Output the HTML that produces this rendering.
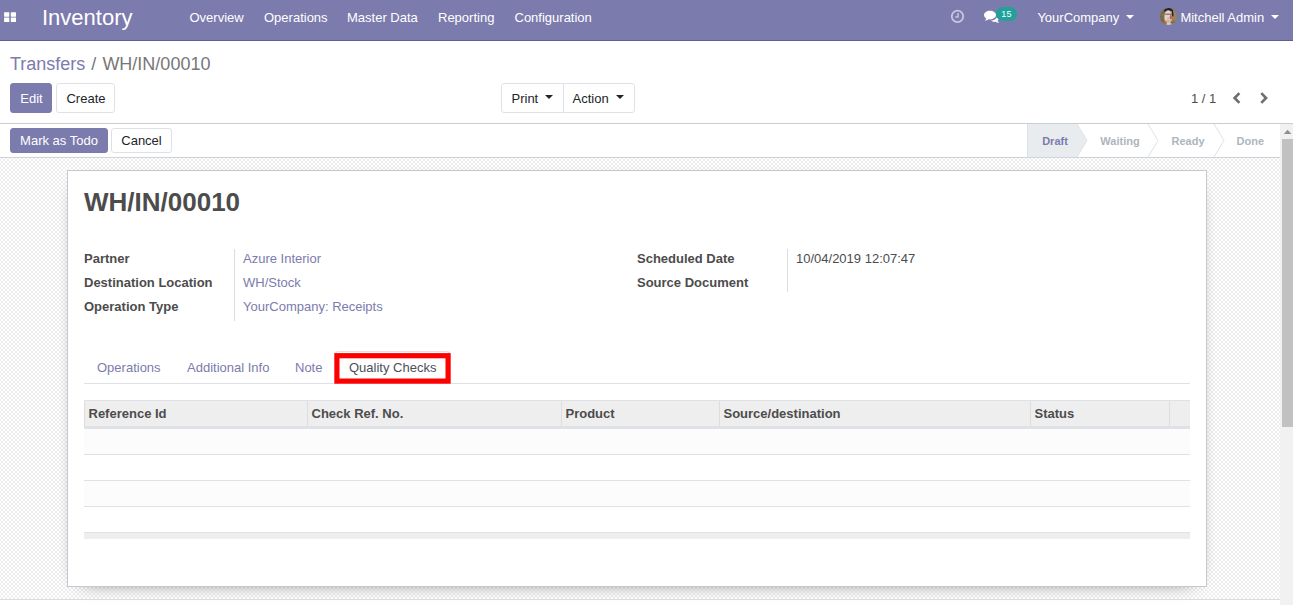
<!DOCTYPE html>
<html lang="en">
<head>
<meta charset="utf-8">
<title>Odoo - WH/IN/00010</title>
<style>
*{box-sizing:border-box;}
html,body{margin:0;padding:0;}
body{width:1293px;height:605px;overflow:hidden;position:relative;background:#fff;
  font-family:"Liberation Sans",Arial,sans-serif;font-size:13px;color:#4c4c4c;line-height:1.5;}
a{color:#7c7bad;text-decoration:none;}

/* ---------- navbar ---------- */
.navbar{position:absolute;left:0;top:0;width:1293px;height:41px;background:#7c7bad;border-bottom:1px solid #5f5e97;}
.navbar .apps{position:absolute;left:4px;top:12px;}
.navbar .brand{position:absolute;left:42px;top:0;height:35px;line-height:35px;font-size:22px;color:#fff;}
.navbar .menu{position:absolute;top:0;height:35px;line-height:35px;font-size:13px;color:#fff;}
.navbar .sys{position:absolute;top:0;height:35px;line-height:35px;font-size:13px;color:#fff;}
.caret{display:inline-block;width:0;height:0;border-left:4px solid transparent;border-right:4px solid transparent;border-top:4px solid currentColor;vertical-align:middle;}

/* ---------- control panel ---------- */
.cp{position:absolute;left:0;top:41px;width:1293px;height:83px;background:#fff;border-bottom:1px solid #ccc;}
.bc{position:absolute;left:10px;top:10px;font-size:18px;line-height:26px;color:#777;}
.bc a{color:#7c7bad;}
.btn{position:absolute;height:30px;line-height:30px;font-size:13px;border:1px solid #dee2e6;border-radius:3px;background:#fff;color:#212529;text-align:center;white-space:nowrap;}
.btn.primary{background:#7c7bad;border-color:#7c7bad;color:#fff;}

/* ---------- statusbar ---------- */
.sb{position:absolute;left:0;top:124px;width:1280px;height:34px;background:#fff;border-bottom:1px solid #ced4da;}
.sb .btn{height:25px;line-height:23px;}

/* ---------- content ---------- */
.content{position:absolute;left:0;top:158px;width:1280px;height:441px;
  background-color:#fff;
  background-image:conic-gradient(#eee 25%,#fff 0 50%,#eee 0 75%,#fff 0);
  background-size:4px 4px;background-position:-1px -1px;}
.sheet{position:absolute;left:67px;top:12px;width:1140px;height:417px;background:#fff;border:1px solid #c8c8d3;box-shadow:0 5px 20px -15px #000;}
.below{position:absolute;left:0;top:599px;width:1280px;height:6px;background:transparent;border-top:1px solid #dcdcdc;}

h1{position:absolute;left:16px;top:14px;margin:0;font-size:26px;line-height:34px;font-weight:bold;color:#4c4c4c;}
.lbl{position:absolute;font-weight:bold;color:#4c4c4c;line-height:20px;white-space:nowrap;}
.val{position:absolute;line-height:20px;white-space:nowrap;}
.vsep{position:absolute;width:1px;background:#ddd;}

.tabs{position:absolute;left:16px;top:182px;width:1106px;height:31px;border-bottom:1px solid #dee2e6;}
.tab{position:absolute;top:0;height:31px;line-height:30px;color:#7c7bad;white-space:nowrap;}
.tab.active{color:#495057;}
.hl{position:absolute;border:4px solid #f00;}

.lst{position:absolute;left:16px;top:229px;width:1106px;}
.lh{position:relative;height:29px;background:#eee;border-top:1px solid #dee2e6;border-bottom:3px solid #dee2e6;}
.th{position:absolute;top:0;height:25px;line-height:25px;border-left:1px solid #ddd;padding-left:3.500px;font-weight:bold;color:#4c4c4c;white-space:nowrap;}
.lr{height:26px;border-bottom:1px solid #dee2e6;background:#fff;}
.lr.odd{background:#fcfcfc;}
.lr.last{height:25px;border-bottom:0;}
.lf{height:7px;background:#eee;border-top:1px solid #dee2e6;}

/* ---------- scrollbar ---------- */
.scroll{position:absolute;left:1280px;top:124px;width:13px;height:481px;background:#f1f1f1;}
.scroll .thumb{position:absolute;left:2px;top:15px;width:11px;height:288px;background:#c1c1c1;}
.scroll .up{position:absolute;left:4px;top:6px;width:0;height:0;border-left:3.500px solid transparent;border-right:3.500px solid transparent;border-bottom:4px solid #8b8b8b;}
</style>
</head>
<body>

<div class="navbar">
  <svg class="apps" width="13" height="11" viewBox="0 0 13 11"><g fill="#fff"><rect x="0.100" y="0.300" width="5.200" height="4.400" rx="0.500"/><rect x="6.800" y="0.300" width="5.200" height="4.400" rx="0.500"/><rect x="0.100" y="5.600" width="5.200" height="4.300" rx="0.500"/><rect x="6.800" y="5.600" width="5.200" height="4.300" rx="0.500"/></g></svg>
  <div class="brand">Inventory</div>
  <div class="menu" style="left:189.500px">Overview</div>
  <div class="menu" style="left:264px">Operations</div>
  <div class="menu" style="left:347px">Master Data</div>
  <div class="menu" style="left:438px">Reporting</div>
  <div class="menu" style="left:514.500px">Configuration</div>

  <svg style="position:absolute;left:950px;top:9px" width="15" height="15" viewBox="0 0 15 15"><circle cx="7.500" cy="7.400" r="5.700" fill="none" stroke="#c7c5e0" stroke-width="1.800"/><path d="M8 4v4H5.300" fill="none" stroke="#c7c5e0" stroke-width="1.500"/></svg>
  <svg style="position:absolute;left:984px;top:10px" width="16" height="14" viewBox="0 0 16 14"><path fill="#fff" d="M6 0.800C2.700 0.800 0 2.700 0 5.100c0 1.400 0.900 2.600 2.200 3.400C2 9.400 1.400 10.100 0.800 10.700c1.600-0.100 3-0.700 3.900-1.400 0.400 0.100 0.900 0.100 1.300 0.100 3.300 0 6-1.900 6-4.300S9.300 0.800 6 0.800z"/><path fill="#fff" d="M13.300 10.600c1.100-0.700 1.900-1.800 1.900-3 0-1.300-0.900-2.500-2.300-3.200 0.100 0.400 0.200 0.700 0.200 1.100 0 2.700-2.800 4.800-6.300 4.900 0.900 0.800 2.200 1.300 3.700 1.300 0.400 0 0.800 0 1.200-0.100 0.800 0.600 2 1.100 3.400 1.200-0.500-0.500-1-1.200-1.200-2z" transform="translate(0,0.200)"/></svg>
  <div style="position:absolute;left:996px;top:7px;width:21px;height:14px;border-radius:7px;background:#21a19a;color:#fff;font-size:9px;line-height:14px;text-align:center;letter-spacing:0.300px;">15</div>
  <div class="sys" style="left:1037.400px">YourCompany</div>
  <div class="caret" style="position:absolute;left:1126px;top:15px;color:#fff"></div>
  <svg style="position:absolute;left:1160px;top:8px" width="17" height="17" viewBox="0 0 17 17">
    <defs><clipPath id="av"><circle cx="8.500" cy="8.500" r="8.500"/></clipPath></defs>
    <g clip-path="url(#av)">
      <rect width="17" height="17" fill="#877048"/>
      <rect x="0" y="0" width="6" height="17" fill="#7c6944"/>
      <rect x="11" y="3.500" width="6" height="0.900" fill="#b59e6c"/><rect x="11" y="5.500" width="6" height="0.900" fill="#b59e6c"/><rect x="11" y="7.500" width="6" height="0.900" fill="#b59e6c"/><rect x="11" y="9.500" width="6" height="0.900" fill="#b59e6c"/><rect x="11" y="11.500" width="6" height="0.900" fill="#ab9460"/>
      <rect x="1" y="6.500" width="3" height="0.800" fill="#9a8454"/><rect x="1" y="9.500" width="3" height="0.800" fill="#946a44"/>
      <path d="M3.900 3.300C4.500 0.600 8 -0.500 10.500 0.300C12.700 1 13.700 3 13.400 8.500L12.100 8L12 3.200C10 2.300 7 2.200 5 3.500Z" fill="#241c28"/>
      <ellipse cx="8.200" cy="8.900" rx="3.900" ry="6.600" fill="#dfd1cb"/>
      <ellipse cx="8" cy="13.300" rx="3" ry="1.900" fill="#d4b49e"/>
      <ellipse cx="10.900" cy="9.300" rx="1.200" ry="2.300" fill="#b9494b" opacity="0.850"/>
      <circle cx="8.300" cy="10.300" r="0.900" fill="#dfa3a5"/>
      <path d="M5.200 6.200H12" stroke="#5b4a4d" stroke-width="0.900" fill="none"/>
      <ellipse cx="5" cy="14.300" rx="1.600" ry="1.400" fill="#a9783e"/>
      <path d="M5.800 17C6.200 15.300 7.600 14.700 9.500 14.900C11.500 15.100 12.500 15.900 12.800 17Z" fill="#cfd1d6"/>
    </g>
  </svg>
  <div class="sys" style="left:1180.400px">Mitchell Admin</div>
  <div class="caret" style="position:absolute;left:1271px;top:15px;color:#fff"></div>
</div>

<div class="cp">
  <div class="bc"><a>Transfers</a><span style="padding:0 6px 0 6px">/</span>WH/IN/00010</div>
  <div class="btn primary" style="left:10px;top:42px;width:42px;padding-left:1px;">Edit</div>
  <div class="btn" style="left:56px;top:42px;width:59px;padding-left:1px;">Create</div>
  <div class="btn" style="left:501px;top:42px;width:63px;border-radius:3px 0 0 3px;text-align:left;padding-left:9.500px;">Print</div>
  <div class="btn" style="left:563px;top:42px;width:72px;border-radius:0 3px 3px 0;text-align:left;padding-left:8.500px;">Action</div>
  <div class="caret" style="position:absolute;left:545px;top:54px;color:#212529"></div>
  <div class="caret" style="position:absolute;left:616px;top:54px;color:#212529"></div>
  <div style="position:absolute;left:1191px;top:48px;line-height:20px;font-size:13px;color:#4c4c4c;">1 / 1</div>
  <svg style="position:absolute;left:1231px;top:50px" width="12" height="14" viewBox="0 0 12 14"><path d="M8.400 2.100L3.600 7l4.800 4.900" fill="none" stroke="#6d6d72" stroke-width="2.600"/></svg>
  <svg style="position:absolute;left:1258px;top:50px" width="12" height="14" viewBox="0 0 12 14"><path d="M3.300 2.100L8.100 7l-4.800 4.900" fill="none" stroke="#6d6d72" stroke-width="2.600"/></svg>
</div>

<div class="sb">
  <div class="btn primary" style="left:10px;top:4px;width:98px;">Mark as Todo</div>
  <div class="btn" style="left:111px;top:4px;width:61px;">Cancel</div>
  <svg style="position:absolute;left:1027px;top:0" width="253" height="33" viewBox="0 0 253 33">
    <path d="M0.500 0V33" stroke="#dee2e6" fill="none"/>
    <path d="M1 0H50L60 16.500L50 33H1Z" fill="#e9ecef"/>
    <path d="M50 0L60 16.500L50 33" stroke="#dee2e6" fill="none"/>
    <path d="M121 0L131 16.500L121 33" stroke="#dee2e6" fill="none"/>
    <path d="M187 0L197 16.500L187 33" stroke="#dee2e6" fill="none"/>
    <g font-family="Liberation Sans, Arial, sans-serif" font-size="11" font-weight="bold" text-anchor="middle">
      <text x="28" y="21" fill="#7c7bad">Draft</text>
      <text x="93" y="21" fill="#adb5bd">Waiting</text>
      <text x="161" y="21" fill="#adb5bd">Ready</text>
      <text x="223.300" y="21" fill="#adb5bd">Done</text>
    </g>
  </svg>
</div>

<div class="content">
  <div class="sheet">
    <h1>WH/IN/00010</h1>

    <div class="lbl" style="left:16px;top:78px;">Partner</div>
    <div class="lbl" style="left:16px;top:102px;">Destination Location</div>
    <div class="lbl" style="left:16px;top:126px;">Operation Type</div>
    <div class="vsep" style="left:166px;top:78px;height:72px;"></div>
    <a class="val" style="left:175px;top:78px;">Azure Interior</a>
    <a class="val" style="left:175px;top:102px;">WH/Stock</a>
    <a class="val" style="left:175px;top:126px;">YourCompany: Receipts</a>

    <div class="lbl" style="left:569px;top:78px;">Scheduled Date</div>
    <div class="lbl" style="left:569px;top:102px;">Source Document</div>
    <div class="vsep" style="left:719px;top:78px;height:43px;"></div>
    <div class="val" style="left:728px;top:78px;">10/04/2019 12:07:47</div>

    <div style="position:absolute;left:267px;top:180px;width:115px;height:33px;border:1px solid #dee2e6;border-bottom:0;border-radius:3px 3px 0 0;background:#fff;"></div>
    <div class="tabs">
      <div class="tab" style="left:13px;">Operations</div>
      <div class="tab" style="left:103px;">Additional Info</div>
      <div class="tab" style="left:211px;">Note</div>
      <div class="tab active" style="left:265px;">Quality Checks</div>
    </div>
    <svg style="position:absolute;left:260px;top:176px" width="130" height="42" viewBox="0 0 130 42"><rect x="8.900" y="8.700" width="111.200" height="25.400" fill="none" stroke="#ff0000" stroke-width="5.200"/></svg>

    <div class="lst">
      <div class="lh">
        <div class="th" style="left:0;width:223px;">Reference Id</div>
        <div class="th" style="left:223px;width:254px;">Check Ref. No.</div>
        <div class="th" style="left:477px;width:158px;">Product</div>
        <div class="th" style="left:635px;width:311px;">Source/destination</div>
        <div class="th" style="left:946px;width:139px;">Status</div>
        <div class="th" style="left:1085px;width:21px;"></div>
      </div>
      <div class="lr odd"></div>
      <div class="lr"></div>
      <div class="lr odd"></div>
      <div class="lr last"></div>
      <div class="lf"></div>
    </div>
  </div>
</div>
<div class="below"></div>

<div class="scroll"><svg style="position:absolute;left:3px;top:5px" width="10" height="6" viewBox="0 0 10 6"><path d="M0.800 5.100L4.600 0.700L8.400 5.100Z" fill="#8e8e8e"/></svg><div class="thumb"></div></div>

</body>
</html>
